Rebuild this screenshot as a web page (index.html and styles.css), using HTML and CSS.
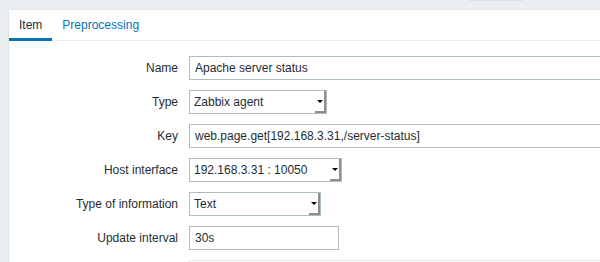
FILE: index.html
```html
<!DOCTYPE html>
<html lang="en">
<head>
  <meta charset="UTF-8">
  <title>Item</title>
  <link rel="stylesheet" href="styles.css">
</head>
<body>
  <div class="header">
    <div class="header-pill"></div>
  </div>

  <div class="card">
    <ul class="tabs">
      <li class="tab active">Item</li>
      <li class="tab">Preprocessing</li>
    </ul>

    <div class="form">
      <label class="form-label">Name</label>
      <div class="form-field">
        <div class="input wide">Apache server status</div>
      </div>

      <label class="form-label">Type</label>
      <div class="form-field">
        <div class="select type-select">
          <span class="select-text">Zabbix agent</span>
          <span class="select-arrow"></span>
        </div>
      </div>

      <label class="form-label">Key</label>
      <div class="form-field">
        <div class="input wide">web.page.get[192.168.3.31,/server-status]</div>
      </div>

      <label class="form-label">Host interface</label>
      <div class="form-field">
        <div class="select host-select">
          <span class="select-text">192.168.3.31 : 10050</span>
          <span class="select-arrow"></span>
        </div>
      </div>

      <label class="form-label">Type of information</label>
      <div class="form-field">
        <div class="select info-select">
          <span class="select-text">Text</span>
          <span class="select-arrow"></span>
        </div>
      </div>

      <label class="form-label">Update interval</label>
      <div class="form-field">
        <div class="input interval">30s</div>
      </div>

      <label class="form-label"></label>
      <div class="form-field">
        <div class="input wide readonly"></div>
      </div>
    </div>
  </div>
</body>
</html>
```

FILE: styles.css
```css
html, body {
  margin: 0;
  padding: 0;
  overflow: hidden;
}
body {
  background-color: #ebeef0;
  font-family: 'Liberation Sans', Arial, sans-serif;
  font-size: 12px;
  color: #1f2c33;
  height: 262px;
}
.header {
  height: 9px;
  display: flex;
  justify-content: flex-end;
}
.header-pill {
  width: 56px;
  height: 1px;
  margin-right: 76px;
  background-color: #dde1e4;
  border-radius: 0 0 2px 2px;
}
.card {
  margin-left: 8px;
  background-color: #ffffff;
  border-top: 1px solid #dfe4e7;
  border-left: 1px solid #dfe4e7;
  height: 252px;
  overflow: hidden;
}
.tabs {
  list-style: none;
  margin: 0;
  padding: 0;
  display: flex;
  border-bottom: 1px solid #ebebeb;
}
.tab {
  height: 30px;
  line-height: 30px;
  padding: 0 10px;
  color: #0275b8;
  box-sizing: border-box;
}
.tab.active {
  color: #1f2c33;
  height: 31px;
  margin-bottom: -1px;
  border-bottom: 3px solid #0275b8;
}
.form {
  display: grid;
  grid-template-columns: 169px 1fr;
  column-gap: 11px;
  row-gap: 10px;
  padding-top: 15px;
}
.form-label {
  text-align: right;
  line-height: 24px;
  height: 24px;
  white-space: nowrap;
}
.form-field {
  display: flex;
  height: 24px;
  min-width: 0;
  overflow: hidden;
}
.input {
  height: 24px;
  box-sizing: border-box;
  border: 1px solid #acbbc4;
  padding: 0 5px;
  line-height: 22px;
  white-space: nowrap;
  flex-shrink: 0;
}
.input.wide {
  width: 460px;
}
.input.interval {
  width: 150px;
}
.input.readonly {
  border-color: #e4e8ea;
}
.select {
  height: 24px;
  box-sizing: border-box;
  border: 1px solid #acbbc4;
  display: flex;
  align-items: stretch;
  padding-left: 4px;
  flex-shrink: 0;
}
.type-select {
  width: 138px;
}
.host-select {
  width: 153px;
}
.info-select {
  width: 132px;
}
.select-text {
  flex: 1;
  line-height: 22px;
  white-space: nowrap;
  overflow: hidden;
}
.select-arrow {
  width: 11px;
  box-shadow: inset -2px -2px 0 #8e8e8e;
  display: flex;
  align-items: center;
  justify-content: center;
}
.select-arrow::after {
  content: '';
  width: 0;
  height: 0;
  margin: 0 2px 2px 0;
  border-left: 3px solid transparent;
  border-right: 3px solid transparent;
  border-top: 3px solid #000000;
}
```
